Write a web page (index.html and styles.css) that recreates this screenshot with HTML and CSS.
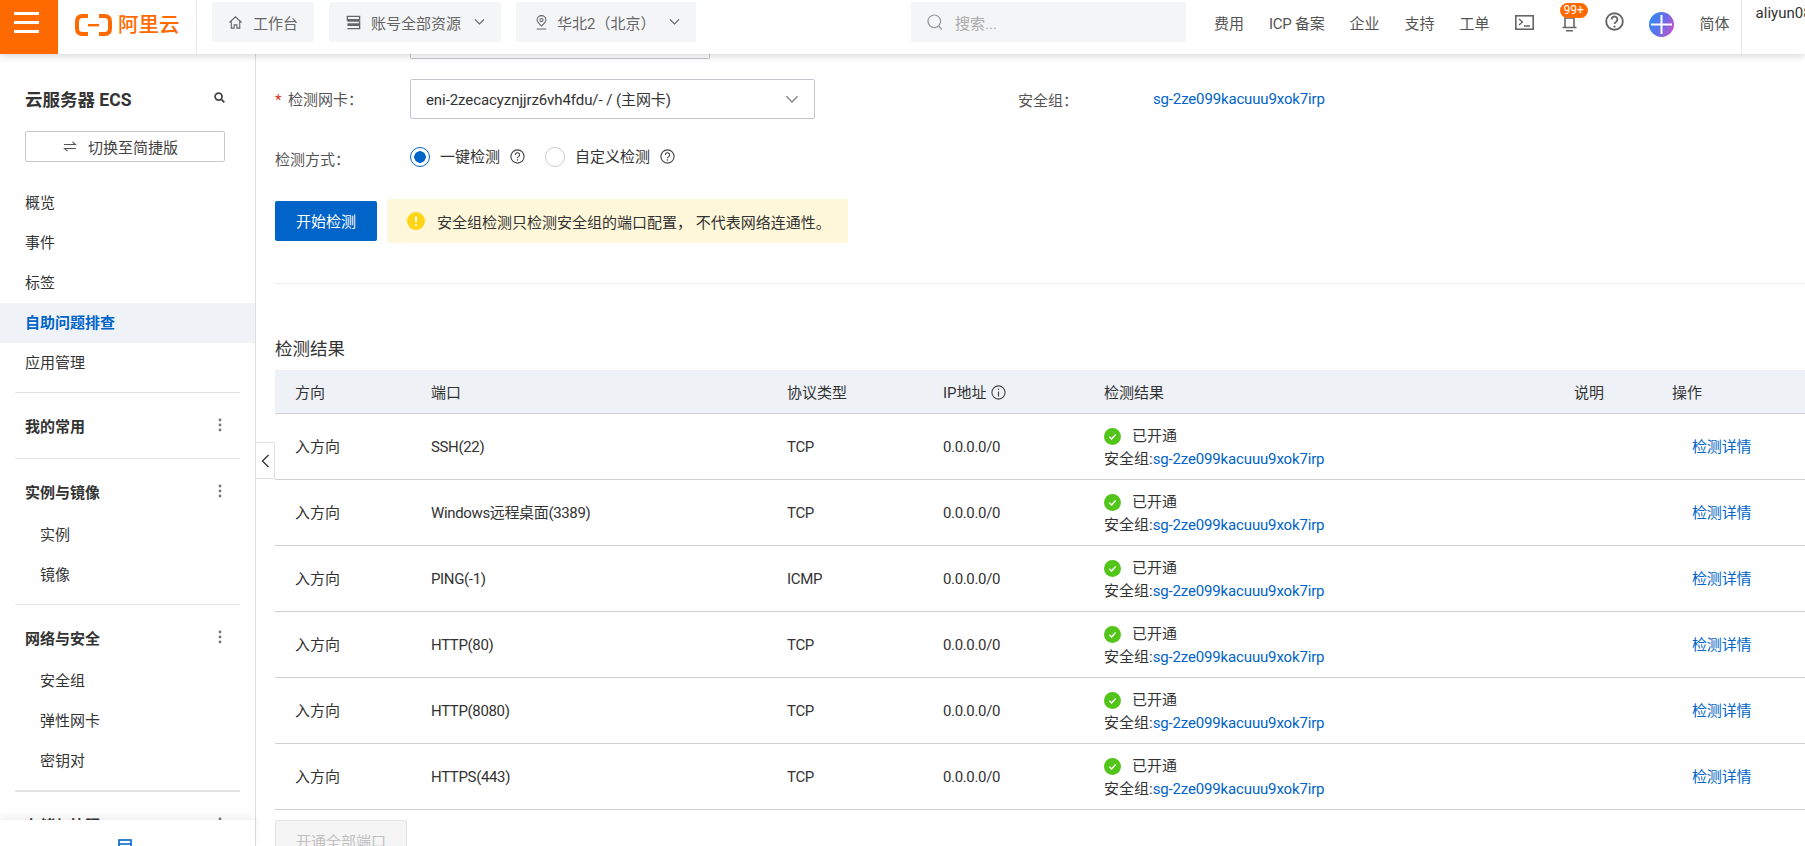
FILE: index.html
```html
<!DOCTYPE html>
<html lang="zh-CN">
<head>
<meta charset="utf-8">
<title>云服务器 ECS</title>
<link rel="stylesheet" href="styles.css">
</head>
<body>
<svg class="defs" width="0" height="0">
  <symbol id="q" viewBox="0 0 15 15"><circle cx="7.5" cy="7.5" r="6.6" fill="none" stroke="currentColor" stroke-width="1.1"/><path d="M5.4 5.9a2.1 2.1 0 1 1 3.3 1.7c-.8.5-1.2.9-1.2 1.7" fill="none" stroke="currentColor" stroke-width="1.1"/><circle cx="7.5" cy="11" r=".8" fill="currentColor"/></symbol>
  <symbol id="ok" viewBox="0 0 17 17"><circle cx="8.5" cy="8.5" r="8.5" fill="#52c41a"/><path d="M5.4 8.7l2.2 2.2 4-4.3" fill="none" stroke="#fff" stroke-width="1.4"/></symbol>
  <symbol id="chev" viewBox="0 0 12 8"><path d="M1 1.2l5 5 5-5" fill="none" stroke="currentColor" stroke-width="1.3"/></symbol>
  <symbol id="dots" viewBox="0 0 4 14"><circle cx="2" cy="2" r="1.4" fill="#777"/><circle cx="2" cy="7" r="1.4" fill="#777"/><circle cx="2" cy="12" r="1.4" fill="#777"/></symbol>
</svg>
<div class="app">
  <header class="topbar">
    <button class="burger" type="button" aria-label="菜单"><i></i><i></i><i></i></button>
    <div class="logo">
      <svg class="logo-mark" viewBox="0 0 37 22"><path d="M13 2H7.500Q2 2 2 7.500v7Q2 20 7.500 20H13" fill="none" stroke="#ff6a00" stroke-width="4"/><path d="M24 2h5.500Q35 2 35 7.500v7Q35 20 29.500 20H24" fill="none" stroke="#ff6a00" stroke-width="4"/><rect x="13" y="10" width="11" height="2.400" fill="#ff6a00"/></svg>
      <span class="logo-text">阿里云</span>
    </div>
    <a class="pill pill-work">
      <svg class="pill-icon" viewBox="0 0 16 16"><path d="M1.500 8L8 2l6.500 6M3.500 7v7h3v-3.500h3V14h3V7" fill="none" stroke="#666" stroke-width="1.200"/></svg>
      <span>工作台</span>
    </a>
    <a class="pill pill-acct">
      <svg class="pill-icon" viewBox="0 0 16 16"><path d="M1.500 1.500h13v3.500h-13zM1.500 6.500h13M14.500 6.500v3h-13M1.500 11h13v3.500h-13" fill="none" stroke="#666" stroke-width="1.500"/></svg>
      <span>账号全部资源</span>
      <svg class="pill-chev"><use href="#chev"/></svg>
    </a>
    <a class="pill pill-region">
      <svg class="pill-icon" viewBox="0 0 14 17"><path d="M7 12.500C4 9.800 2 8 2 5.700a5 5 0 0 1 10 0C12 8 10 9.800 7 12.500zM1.500 15.800h11" fill="none" stroke="#666" stroke-width="1.200"/><circle cx="7" cy="5.700" r="1.800" fill="none" stroke="#666" stroke-width="1.200"/></svg>
      <span>华北2（北京）</span>
      <svg class="pill-chev"><use href="#chev"/></svg>
    </a>
    <label class="search">
      <svg class="search-icon" viewBox="0 0 16 17"><circle cx="7.300" cy="7.300" r="6.300" fill="none" stroke="#999" stroke-width="1.200"/><path d="M11.800 12l3 3.500" stroke="#999" stroke-width="1.200"/></svg>
      <span>搜索...</span>
    </label>
    <nav class="tools">
      <a>费用</a><a class="tool-icp">ICP 备案</a><a>企业</a><a>支持</a><a>工单</a>
      <svg class="tool-term" viewBox="0 0 19 15"><rect x=".8" y=".8" width="17.400" height="13.400" fill="none" stroke="#666" stroke-width="1.600"/><path d="M4 4l3.500 3L4 10M9 11h6" fill="none" stroke="#666" stroke-width="1.400"/></svg>
      <span class="bell">
        <svg class="bell-icon" viewBox="0 0 21 19"><path d="M6 14.500V5h9v9.500M3.500 14.500h14M7 17.800h7" fill="none" stroke="#666" stroke-width="1.600"/></svg>
        <b class="badge">99+</b>
      </span>
      <svg class="tool-help" viewBox="0 0 19 19"><circle cx="9.500" cy="9.500" r="8.300" fill="none" stroke="#666" stroke-width="1.900"/><path d="M6.600 7.400a2.900 2.900 0 1 1 4.600 2.300c-1.100.7-1.700 1.100-1.700 2.300" fill="none" stroke="#666" stroke-width="1.900"/><circle cx="9.500" cy="14.600" r="1.100" fill="#666"/></svg>
      <svg class="tool-avatar" viewBox="0 0 25 25">
        <defs><linearGradient id="av" x1="0" y1="0.300" x2="1" y2="0.700"><stop offset="0" stop-color="#2f8cf5"/><stop offset=".55" stop-color="#6b6be8"/><stop offset="1" stop-color="#c554c8"/></linearGradient></defs>
        <circle cx="12.500" cy="12.500" r="12.500" fill="url(#av)"/><path d="M12.500 3v19M2 12.500h21" stroke="#fff" stroke-width="2"/>
      </svg>
      <a>简体</a>
    </nav>
    <div class="user">aliyun0836</div>
  </header>

  <div class="body">
    <aside class="sidebar">
      <div class="side-scroll">
        <div class="side-head">
          <h1>云服务器 ECS</h1>
          <svg class="side-search" viewBox="0 0 11 11"><circle cx="4.600" cy="4.600" r="3.500" fill="none" stroke="#444" stroke-width="1.700"/><path d="M7.300 7.300l3 3" stroke="#444" stroke-width="1.900"/></svg>
        </div>
        <button class="switch" type="button">
          <svg class="switch-icon" viewBox="0 0 14 11"><path d="M1 3.500h11.500L9.500 .8M13 7.500H1.500l3 2.700" fill="none" stroke="#555" stroke-width="1.100"/></svg>
          <span>切换至简捷版</span>
        </button>
        <div class="nav-top">
          <a class="nav-item">概览</a>
          <a class="nav-item">事件</a>
          <a class="nav-item">标签</a>
          <a class="nav-item is-active">自助问题排查</a>
          <a class="nav-item">应用管理</a>
        </div>
        <div class="group">
          <div class="group-title"><span>我的常用</span><svg class="dots"><use href="#dots"/></svg></div>
        </div>
        <div class="group">
          <div class="group-title"><span>实例与镜像</span><svg class="dots"><use href="#dots"/></svg></div>
          <a class="sub-item">实例</a>
          <a class="sub-item">镜像</a>
        </div>
        <div class="group group-thick">
          <div class="group-title"><span>网络与安全</span><svg class="dots"><use href="#dots"/></svg></div>
          <a class="sub-item">安全组</a>
          <a class="sub-item">弹性网卡</a>
          <a class="sub-item">密钥对</a>
        </div>
        <div class="group">
          <div class="group-title"><span>存储与快照</span><svg class="dots"><use href="#dots"/></svg></div>
        </div>
      </div>
      <div class="side-foot">
        <svg class="foot-icon" viewBox="0 0 14 14"><rect x="1" y="1" width="12" height="12" fill="none" stroke="#0064c8" stroke-width="1.600"/><path d="M1 5h12M3.500 8.500h7" stroke="#0064c8" stroke-width="1.400"/></svg>
      </div>
    </aside>

    <main class="main">
      <div class="collapse"><svg viewBox="0 0 9 14"><path d="M7.500 1L1.500 7l6 6" fill="none" stroke="#333" stroke-width="1.300"/></svg></div>

      <div class="clipped-input"></div>

      <div class="form-row row-nic">
        <label class="label label-nic"><em>*</em>检测网卡：</label>
        <div class="select"><span class="select-value">eni-2zecacyznjjrz6vh4fdu/- / (主网卡)</span><svg class="select-chev"><use href="#chev"/></svg></div>
        <span class="label label-sg">安全组：</span>
        <a class="link">sg-2ze099kacuuu9xok7irp</a>
      </div>

      <div class="form-row row-mode">
        <span class="label label-mode">检测方式：</span>
        <span class="radio is-on"></span><span class="radio-text">一键检测</span><svg class="q"><use href="#q"/></svg>
        <span class="radio radio-2"></span><span class="radio-text">自定义检测</span><svg class="q"><use href="#q"/></svg>
      </div>

      <div class="action-row">
        <button class="primary" type="button">开始检测</button>
        <div class="alert">
          <svg class="alert-icon" viewBox="0 0 18 18"><circle cx="9" cy="9" r="9" fill="#ffd415"/><path d="M9 4.200v6" stroke="#fff" stroke-width="1.800"/><circle cx="9" cy="13" r="1.100" fill="#fff"/></svg>
          <span>安全组检测只检测安全组的端口配置， 不代表网络连通性。</span>
        </div>
      </div>

      <hr class="divider">
      <h2 class="result-title">检测结果</h2>

      <table class="table">
        <colgroup><col class="c1"><col class="c2"><col class="c3"><col class="c4"><col class="c5"><col class="c6"><col class="c7"></colgroup>
        <thead>
          <tr><th>方向</th><th>端口</th><th>协议类型</th><th>IP地址 <svg class="q q-info" viewBox="0 0 15 15"><circle cx="7.500" cy="7.500" r="6.600" fill="none" stroke="currentColor" stroke-width="1.100"/><path d="M7.500 6.500v5" stroke="currentColor" stroke-width="1.200"/><circle cx="7.500" cy="4.300" r=".8" fill="currentColor"/></svg></th><th>检测结果</th><th>说明</th><th>操作</th></tr>
        </thead>
        <tbody>
          <tr><td>入方向</td><td class="ltn">SSH(22)</td><td class="ltn">TCP</td><td class="ltn">0.0.0.0/0</td><td><div class="status"><svg class="ok"><use href="#ok"/></svg>已开通</div><div>安全组:<a class="link">sg-2ze099kacuuu9xok7irp</a></div></td><td></td><td class="op"><a class="link">检测详情</a></td></tr>
          <tr><td>入方向</td><td class="ltn">Windows远程桌面(3389)</td><td class="ltn">TCP</td><td class="ltn">0.0.0.0/0</td><td><div class="status"><svg class="ok"><use href="#ok"/></svg>已开通</div><div>安全组:<a class="link">sg-2ze099kacuuu9xok7irp</a></div></td><td></td><td class="op"><a class="link">检测详情</a></td></tr>
          <tr><td>入方向</td><td class="ltn">PING(-1)</td><td class="ltn">ICMP</td><td class="ltn">0.0.0.0/0</td><td><div class="status"><svg class="ok"><use href="#ok"/></svg>已开通</div><div>安全组:<a class="link">sg-2ze099kacuuu9xok7irp</a></div></td><td></td><td class="op"><a class="link">检测详情</a></td></tr>
          <tr><td>入方向</td><td class="ltn">HTTP(80)</td><td class="ltn">TCP</td><td class="ltn">0.0.0.0/0</td><td><div class="status"><svg class="ok"><use href="#ok"/></svg>已开通</div><div>安全组:<a class="link">sg-2ze099kacuuu9xok7irp</a></div></td><td></td><td class="op"><a class="link">检测详情</a></td></tr>
          <tr><td>入方向</td><td class="ltn">HTTP(8080)</td><td class="ltn">TCP</td><td class="ltn">0.0.0.0/0</td><td><div class="status"><svg class="ok"><use href="#ok"/></svg>已开通</div><div>安全组:<a class="link">sg-2ze099kacuuu9xok7irp</a></div></td><td></td><td class="op"><a class="link">检测详情</a></td></tr>
          <tr><td>入方向</td><td class="ltn">HTTPS(443)</td><td class="ltn">TCP</td><td class="ltn">0.0.0.0/0</td><td><div class="status"><svg class="ok"><use href="#ok"/></svg>已开通</div><div>安全组:<a class="link">sg-2ze099kacuuu9xok7irp</a></div></td><td></td><td class="op"><a class="link">检测详情</a></td></tr>
        </tbody>
      </table>

      <button class="disabled" type="button" disabled>开通全部端口</button>
    </main>
  </div>
</div>
</body>
</html>
```

FILE: styles.css
```css
* { box-sizing: border-box; }
html, body { margin: 0; height: 100%; overflow: hidden; background: #fff; }
body { font-family: Roboto, "Noto Sans CJK SC", sans-serif; font-size: 15px; color: #333; }
.defs { position: absolute; }
a { color: inherit; text-decoration: none; }
button { font: inherit; }
.app { width: 1805px; height: 846px; display: flex; flex-direction: column; overflow: hidden; }

/* top bar */
.topbar { position: relative; z-index: 3; flex: none; height: 54px; display: flex; align-items: flex-start; background: #fff; box-shadow: 0 2px 8px rgba(0,0,0,.16); color: #555; }
.burger { width: 58px; height: 54px; border: 0; padding: 12px 14px 0 ; background: #ff6a00; display: flex; flex-direction: column; gap: 6px; align-items: stretch; }
.burger i { display: block; width: 25px; height: 3px; background: #fff; }
.logo { width: 139px; height: 54px; padding-left: 17px; border-right: 1px solid #e8e8e8; display: flex; align-items: flex-start; }
.logo-mark { width: 37px; height: 22px; margin-top: 14px; }
.logo-text { margin: 10px 0 0 6px; font-size: 20.5px; line-height: 30px; font-weight: 500; color: #ff6a00; letter-spacing: 0; white-space: nowrap; }
.pill { height: 40px; margin-top: 2px; background: #f4f5f7; border-radius: 2px; display: flex; align-items: center; color: #666; white-space: nowrap; }
.pill-work { width: 102px; margin-left: 15px; padding-left: 16px; gap: 10px; }
.pill-acct { width: 172px; margin-left: 15px; padding-left: 17px; gap: 10px; }
.pill-region { width: 180px; margin-left: 15px; padding-left: 18px; gap: 8px; }
.pill-icon { width: 15px; height: 15px; flex: none; }
.pill-chev { width: 11px; height: 8px; flex: none; margin-left: 3px; color: #666; }
.pill-region .pill-chev { margin-left: 6px; }
.search { width: 275px; height: 40px; margin: 2px 0 0 215px; padding-left: 16px; background: #f4f5f7; display: flex; align-items: center; gap: 12px; color: #aaa; }
.search-icon { width: 16px; height: 17px; }
.tools { height: 44px; margin-left: 28px; display: flex; align-items: center; gap: 25px; white-space: nowrap; color: #555; }
.tool-icp { letter-spacing: -.25px; }
.tool-term { width: 19px; height: 15px; }
.bell { position: relative; width: 21px; height: 19px; display: block; }
.bell-icon { width: 21px; height: 19px; display: block; }
.badge { position: absolute; left: 1px; top: -10px; width: 28px; height: 15px; border-radius: 8px; background: #ff6a00; color: #fff; font-size: 12px; font-weight: 400; line-height: 15px; text-align: center; }
.tool-help { width: 19px; height: 19px; margin-top: -2px; }
.tool-avatar { width: 25px; height: 25px; margin: 4px 1px 0 0; }
.user { flex: none; width: 64px; height: 54px; margin-left: 11px; padding: 3px 0 0 14px; border-left: 1px solid #e8e8e8; line-height: 20px; color: #333; overflow: hidden; white-space: nowrap; }

/* layout */
.body { flex: 1; min-height: 0; display: flex; }
.sidebar { flex: none; width: 256px; border-right: 1px solid #dedede; display: flex; flex-direction: column; background: #fff; }
.side-scroll { flex: 1; min-height: 0; overflow: hidden; }
.side-head { height: 24px; margin: 34px 30px 0 25px; display: flex; justify-content: space-between; align-items: center; }
.side-head h1 { margin: 0; font-size: 17.5px; line-height: 24px; font-weight: 700; color: #333; }
.side-search { width: 11px; height: 11px; margin-top: -5px; }
.switch { display: flex; width: 200px; height: 31px; margin: 19px 0 0 25px; padding: 0 0 0 37px; align-items: center; gap: 11px; background: #fff; border: 1px solid #c8c8c8; border-radius: 2px; color: #444; }
.switch-icon { width: 14px; height: 11px; }
.nav-top { margin-top: 21px; padding-bottom: 9px; }
.nav-item { display: block; height: 40px; padding-left: 25px; line-height: 40px; }
.nav-item.is-active { background: #eff3f8; color: #0064c8; font-weight: 700; }
.group { margin: 0 15px; padding: 12px 0 9px; border-top: 1px solid #e3e3e3; }
.group-thick + .group { border-top-width: 2px; }
.group-title { height: 40px; margin-bottom: 4px; padding: 0 18px 0 10px; display: flex; justify-content: space-between; align-items: center; font-weight: 700; }
.dots { width: 4px; height: 14px; }
.sub-item { display: block; height: 40px; padding-left: 25px; line-height: 40px; }
.side-foot { position: relative; flex: none; height: 26px; background: #fff; box-shadow: 0 -3px 8px rgba(0,0,0,.07); overflow: hidden; }
.foot-icon { position: absolute; left: 118px; top: 19px; width: 14px; height: 14px; }

/* main */
.main { position: relative; flex: 1; min-width: 0; padding-left: 19px; overflow: hidden; }
.collapse { position: absolute; left: 0; top: 388px; width: 19px; height: 37px; background: #fff; border: 1px solid #dedede; border-left: 0; border-radius: 0 2px 0 0; display: flex; align-items: center; justify-content: center; }
.collapse svg { width: 9px; height: 14px; }
.clipped-input { width: 300px; height: 5px; margin-left: 135px; border: 1px solid #c4c6cf; border-top: 0; border-radius: 0 0 2px 2px; }
.form-row { display: flex; align-items: center; }
.row-nic { height: 40px; margin-top: 20px; }
.row-mode { height: 20px; margin-top: 28px; }
.label { flex: none; width: 135px; color: #555; white-space: nowrap; }
.label em { display: inline-block; width: 13px; color: #d93026; font-style: normal; }
.label-nic { margin-top: -2px; }
.label-mode { margin-top: 2px; }
.label-sg { margin-left: 203px; }
.select { width: 405px; height: 40px; padding: 0 15px; display: flex; justify-content: space-between; align-items: center; border: 1px solid #c4c6cf; border-radius: 2px; color: #333; white-space: nowrap; }
.select-value { margin-top: -2px; letter-spacing: -.08px; }
.select-chev { width: 14px; height: 9px; color: #888; }
.link { color: #0064c8; letter-spacing: -.15px; }
.radio { flex: none; width: 20px; height: 20px; border-radius: 50%; border: 1px solid #ccc; background: #fff; }
.radio.is-on { border-color: #0064c8; background: radial-gradient(circle, #0064c8 0 5.5px, #fff 6px); }
.radio-2 { margin-left: 20px; }
.radio-text { margin-left: 10px; line-height: 20px; white-space: nowrap; }
.q { width: 15px; height: 15px; margin-left: 10px; margin-top: -2px; color: #444; }
.action-row { margin-top: 32px; display: flex; align-items: center; gap: 10px; height: 44px; }
.primary { width: 102px; height: 40px; padding: 0 0 2px; border: 0; border-radius: 2px; background: #0064c8; color: #fff; }
.alert { width: 461px; height: 44px; padding-left: 20px; display: flex; align-items: center; gap: 12px; background: #fff7d9; border-radius: 2px; white-space: nowrap; color: #333; }
.alert-icon { width: 18px; height: 18px; flex: none; }
.divider { height: 1px; margin: 40px 0 0; border: 0; background: #eee; }
.result-title { margin: 53px 0 0; font-size: 17.5px; line-height: 24px; font-weight: 400; color: #333; }
.table { width: 1530px; margin-top: 9px; table-layout: fixed; border-collapse: separate; border-spacing: 0; }
.c1 { width: 136px; } .c2 { width: 356px; } .c3 { width: 156px; } .c4 { width: 161px; } .c5 { width: 470px; } .c6 { width: 98px; } .c7 { width: 153px; }
.table th { height: 44px; padding: 0 0 0 20px; background: #eef1f6; border-bottom: 1px solid #cfd2d6; font-weight: 400; text-align: left; white-space: nowrap; }
.q-info { margin: 0 0 0 1px; vertical-align: -2px; }
.table td { height: 66px; padding: 2px 0 0 20px; border-bottom: 1px solid #cfcfcf; line-height: 23px; vertical-align: middle; white-space: nowrap; }
.table td.ltn { letter-spacing: -.35px; }
.table td.op { padding-left: 40px; }
.status { display: flex; align-items: center; gap: 11px; }
.ok { width: 17px; height: 17px; }
.disabled { display: block; width: 132px; height: 40px; margin-top: 10px; border: 1px solid #e3e3e3; border-radius: 2px; background: #f5f5f5; color: #c1c1c1; }
```
